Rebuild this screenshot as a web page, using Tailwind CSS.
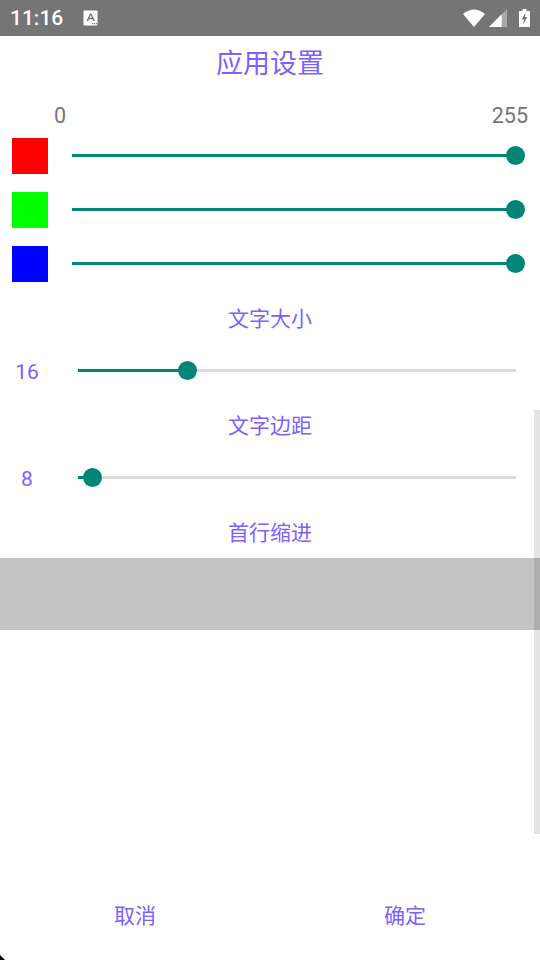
<!DOCTYPE html>
<html lang="zh">
<head>
  <meta charset="UTF-8" />
  <meta name="viewport" content="width=device-width, initial-scale=1.0"/>
  <title>应用设置</title>
  <script src="https://cdn.jsdelivr.net/npm/@tailwindcss/browser@4"></script>
</head>
<body class="relative w-[540px] h-[960px] overflow-hidden bg-white font-['Roboto','Noto_Sans_CJK_SC',sans-serif]">

  <!-- status bar -->
  <div class="h-9 bg-[#757575] flex items-center pl-[10px] pr-[10px] text-white">
    <span class="w-[53px] text-[21px] leading-none font-medium">11:16</span>
    <svg class="ml-[20px]" width="16" height="16" viewBox="0 0 16 16">
      <rect x="0.5" y="0.5" width="14" height="15" rx="1" fill="#fff"/>
      <path d="M3.5 11 L7 3.5 L8.5 3.5 L12 11 L10.3 11 L9.6 9.2 L5.9 9.2 L5.2 11 Z M6.5 7.8 H9 L7.75 5 Z" fill="#757575" fill-rule="evenodd"/>
      <path d="M9 13h1.2v1.2H9zM11 13h1.2v1.2H11zM13 13h1.2v1.2H13z" fill="#757575"/>
    </svg>
    <div class="ml-auto flex items-center">
      <svg width="22" height="18" viewBox="0 0 22 18"><path d="M0 5 Q11 -4 22 5 L11 18 Z" fill="#fff"/></svg>
      <svg class="ml-[4px]" width="18" height="18" viewBox="0 0 18 18">
        <path d="M0 18 L18 0 V18 Z" fill="#a8a8a8"/>
        <path d="M0 18 L12.7 5.3 V18 Z" fill="#fff"/>
      </svg>
      <svg class="ml-[12px]" width="11" height="18" viewBox="0 0 11 18">
        <path d="M3.5 0h4v2H11v16H0V2h3.5z" fill="#fff"/>
        <path d="M6.5 3.5 L2.8 10.5 H5 L4.3 15.5 L8.2 8 H6 Z" fill="#757575"/>
      </svg>
    </div>
  </div>

  <h1 class="h-[56px] flex items-center justify-center text-[27px] font-normal text-[#7b61ff]">应用设置</h1>

  <!-- rgb range labels -->
  <div class="mt-[6px] h-[36px] pl-[54px] pr-3 flex items-center justify-between text-[21.5px] text-[#757575]">
    <span>0</span><span>255</span>
  </div>

  <!-- rgb sliders -->
  <div class="px-3 flex flex-col gap-[18px] mt-[4px]">
    <div class="h-9 flex items-center">
      <div class="w-9 h-9 bg-[#ff0000]"></div>
      <div class="relative ml-6 mb-px w-[444px] h-[3px] bg-[#008577]">
        <div class="absolute right-[-9px] top-[-8px] w-[19px] h-[19px] rounded-full bg-[#008577]"></div>
      </div>
    </div>
    <div class="h-9 flex items-center">
      <div class="w-9 h-9 bg-[#00ff00]"></div>
      <div class="relative ml-6 mb-px w-[444px] h-[3px] bg-[#008577]">
        <div class="absolute right-[-9px] top-[-8px] w-[19px] h-[19px] rounded-full bg-[#008577]"></div>
      </div>
    </div>
    <div class="h-9 flex items-center">
      <div class="w-9 h-9 bg-[#0000ff]"></div>
      <div class="relative ml-6 mb-px w-[444px] h-[3px] bg-[#008577]">
        <div class="absolute right-[-9px] top-[-8px] w-[19px] h-[19px] rounded-full bg-[#008577]"></div>
      </div>
    </div>
  </div>

  <!-- text size -->
  <div class="mt-[20px] h-[36px] flex items-center justify-center text-[21px] text-[#7b61ff]">文字大小</div>
  <div class="mt-[15px] h-[36px] flex items-center">
    <span class="w-[54px] pt-[3px] text-center text-[21px] text-[#7b61ff]">16</span>
    <div class="relative ml-6 mb-px w-[438px] h-[3px] bg-[#dbdbdb]">
      <div class="h-full w-[109px] bg-[#008577]"></div>
      <div class="absolute left-[100px] top-[-8px] w-[19px] h-[19px] rounded-full bg-[#008577]"></div>
    </div>
  </div>

  <!-- text padding -->
  <div class="mt-[20px] h-[36px] flex items-center justify-center text-[21px] text-[#7b61ff]">文字边距</div>
  <div class="mt-[15px] h-[36px] flex items-center">
    <span class="w-[54px] pt-[3px] text-center text-[21px] text-[#7b61ff]">8</span>
    <div class="relative ml-6 mb-px w-[438px] h-[3px] bg-[#dbdbdb]">
      <div class="h-full w-[14px] bg-[#008577]"></div>
      <div class="absolute left-[5px] top-[-8px] w-[19px] h-[19px] rounded-full bg-[#008577]"></div>
    </div>
  </div>

  <!-- first line indent -->
  <div class="mt-[20px] h-[36px] flex items-center justify-center text-[21px] text-[#7b61ff]">首行缩进</div>
  <div class="mt-[6px] h-[72px] bg-[#c4c4c4]"></div>

  <!-- scrollbar overlay -->
  <div class="absolute right-0 top-[410px] w-[6px] h-[424px] bg-black/[0.11]"></div>

  <!-- dialog buttons -->
  <div class="absolute left-0 right-0 bottom-0 h-[86px] flex">
    <button class="flex-1 flex items-center justify-center text-[21px] text-[#7b61ff]">取消</button>
    <button class="flex-1 flex items-center justify-center text-[21px] text-[#7b61ff]">确定</button>
  </div>

  <!-- corner nick -->
  <svg class="absolute left-0 bottom-0" width="5" height="5" viewBox="0 0 5 5"><path d="M0 0 L5 5 H0 Z" fill="#000"/></svg>
</body>
</html>
